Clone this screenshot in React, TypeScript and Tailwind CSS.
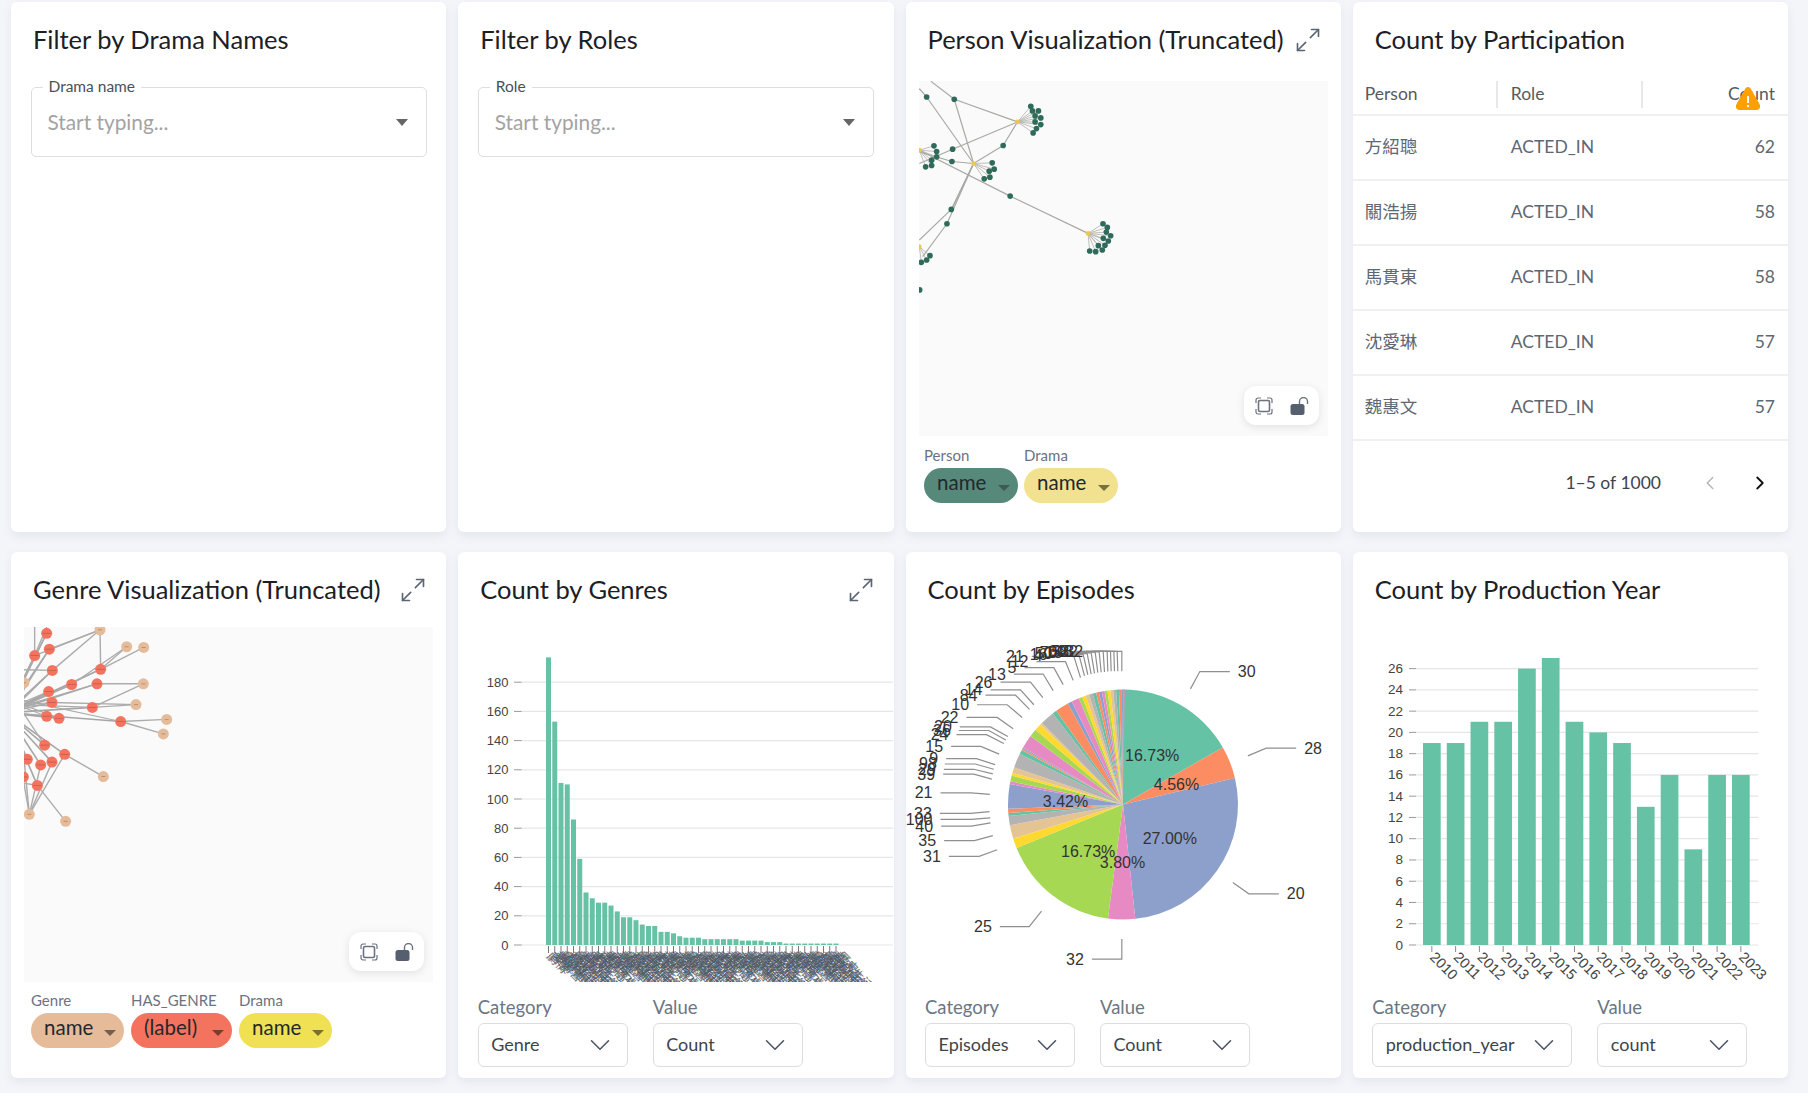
import { ChevronDown, ChevronLeft, ChevronRight, Maximize2 } from "lucide-react";
import type { ReactNode } from "react";

const rows = [
  ["方紹聰", "62"],
  ["關浩揚", "58"],
  ["馬貫東", "58"],
  ["沈愛琳", "57"],
  ["魏惠文", "57"],
];

const setColors = ["#66c2a5", "#fc8d62", "#8da0cb", "#e78ac3", "#a6d854", "#ffd92f", "#e5c494", "#b3b3b3"];

const genreCounts = [197, 153, 111, 110, 86, 59, 36, 32, 29, 29, 27, 23, 19, 19, 17, 14, 13, 13, 9, 9, 8, 6, 5, 5, 5, 4, 4, 4, 4, 4, 4, 3, 3, 3, 3, 2, 2, 2, 1, 1, 1, 1, 1, 1, 1, 1, 1];
const genreNames = ["劇情", "愛情喜劇", "動作片", "古裝", "懸疑推理", "家庭倫理", "都市生活", "警匪", "科幻奇幻", "歷史"];

const yearData = [19, 19, 21, 21, 26, 27, 21, 20, 19, 13, 16, 9, 16, 16];

const pieSlices = [16.73, 4.56, 27, 3.8, 16.73, 1.4, 1.9, 1.3, 0.4, 0.6, 3.42, 0.4, 0.8, 0.4, 0.8, 2.0, 0.6, 0.2, 0.2, 1.9, 1.1, 1.0, 0.3, 2.0, 0.6, 1.9, 0.6, 1.1, 0.5, 0.5, 0.5, 0.5, 0.5, 0.4, 0.4, 0.4, 0.4, 0.4, 0.4, 0.4, 0.4, 0.4, 0.4, 0.38];

// [label, startX, startY, kneeX, kneeY, endX, endY] in crop coordinates
const pieLeaders: [string, number, number, number, number, number, number][] = [
  ["30", 870, 422, 898, 373, 988, 373],
  ["28", 1042, 612, 1097, 590, 1187, 590],
  ["20", 997, 971, 1045, 1003, 1135, 1003],
  ["32", 664, 1131, 664, 1188, 574, 1188],
  ["25", 423, 1052, 386, 1096, 298, 1096],
  ["31", 290, 878, 236, 897, 145, 897],
  ["35", 277, 838, 222, 852, 131, 852],
  ["40", 270, 802, 213, 811, 122, 811],
  ["100", 269, 788, 212, 792, 120, 792],
  ["33", 267, 770, 210, 775, 118, 775],
  ["21", 268, 721, 212, 717, 120, 717],
  ["39", 274, 678, 220, 664, 128, 664],
  ["29", 277, 663, 220, 650, 130, 650],
  ["98", 280, 650, 224, 635, 133, 635],
  ["9", 284, 637, 228, 620, 137, 620],
  ["15", 296, 607, 241, 585, 152, 585],
  ["24", 310, 577, 258, 552, 168, 552],
  ["36", 316, 567, 265, 540, 175, 540],
  ["20", 322, 557, 270, 530, 178, 530],
  ["22", 338, 535, 290, 503, 198, 503],
  ["10", 365, 503, 320, 467, 230, 467],
  ["84", 387, 480, 345, 440, 255, 440],
  ["14", 400, 467, 360, 425, 270, 425],
  ["26", 427, 447, 390, 403, 300, 403],
  ["13", 458, 427, 428, 380, 340, 380],
  ["5", 488, 410, 460, 362, 372, 362],
  ["12", 518, 398, 495, 345, 408, 345],
  ["21", 540, 390, 520, 330, 394, 330],
  ["4", 552, 385, 536, 328, 450, 328],
  ["16", 562, 382, 548, 324, 465, 324],
  ["50", 572, 380, 560, 322, 480, 322],
  ["70", 582, 378, 572, 320, 495, 320],
  ["18", 592, 376, 584, 318, 510, 318],
  ["60", 602, 375, 596, 317, 520, 317],
  ["52", 612, 374, 608, 316, 530, 316],
  ["48", 622, 373, 620, 316, 540, 316],
  ["82", 632, 372, 630, 316, 556, 316],
  ["32", 642, 372, 640, 316, 572, 316],
  ["", 652, 372, 650, 316, 580, 316],
  ["", 664, 372, 664, 316, 590, 316],
];

const personEdges = [
  [45, 33, 115, 87], [115, 87, 305, 155], [115, 87, 173, 280], [10, 55, 32, 80], [32, 80, 173, 280],
  [305, 155, 110, 237], [110, 237, 10, 280], [305, 155, 262, 226], [262, 226, 173, 280], [108, 274, 173, 280],
  [108, 274, 10, 245], [517, 490, 283, 378], [283, 378, 10, 240], [173, 280, 106, 418], [173, 280, 93, 461],
  [106, 418, 10, 510], [93, 461, 20, 560], [173, 280, 110, 412],
];
const personHubs = [
  { x: 305, y: 155, leaves: [[345, 108], [350, 122], [368, 122], [358, 137], [375, 143], [358, 155], [375, 163], [362, 175], [352, 188]] },
  { x: 173, y: 280, leaves: [[229, 278], [235, 297], [220, 303], [222, 321], [205, 326]] },
  { x: 517, y: 490, leaves: [[562, 461], [575, 472], [572, 486], [585, 497], [563, 505], [578, 513], [568, 526], [548, 527], [560, 540], [540, 545], [522, 543]] },
  { x: 10, y: 240, leaves: [[54, 227], [62, 244], [62, 260], [47, 270], [47, 286], [29, 290]] },
  { x: 10, y: 530, leaves: [[42, 557], [32, 570], [16, 577]] },
];
const personDots = [[32, 80], [115, 87], [110, 237], [262, 226], [108, 274], [283, 378], [106, 418], [93, 461], [11, 660]];

const genreReds = [[140, 265], [148, 310], [104, 328], [157, 370], [302, 367], [215, 410], [291, 408], [146, 430], [156, 461], [277, 475], [140, 500], [177, 506], [362, 515], [134, 582], [194, 608], [82, 622], [122, 638], [156, 630], [112, 696], [70, 672]];
const genreTans = [[300, 255], [380, 303], [431, 305], [430, 408], [408, 467], [500, 509], [490, 550], [310, 671], [88, 778], [197, 798], [72, 405]];
const genreLinks = [
  [300, 255, 148, 310], [300, 255, 104, 328], [300, 255, 157, 370], [302, 367, 300, 255], [302, 367, 380, 303], [302, 367, 431, 305],
  [215, 410, 380, 303], [291, 408, 430, 408], [277, 475, 430, 408], [277, 475, 408, 467], [156, 461, 408, 467], [362, 515, 500, 509],
  [362, 515, 490, 550], [194, 608, 310, 671], [112, 696, 197, 798], [88, 778, 194, 608], [88, 778, 122, 638], [88, 778, 156, 630],
  [88, 778, 72, 620], [88, 778, 72, 690], [140, 247, 104, 328], [104, 247, 104, 320], [72, 368, 157, 370], [72, 690, 112, 696],
];

const gx = (x: number) => (x - 72) / 3;
const gy = (y: number) => (y - 247) / 2.835;
const cy = (y: number) => y / 2.835 - 87;

function FitIcon() {
  return (
    <svg width="18" height="18" viewBox="0 0 18 18" fill="none" stroke="#6b7280" strokeWidth="1.2">
      <rect x="3.5" y="3.5" width="11" height="11" rx="1.5" strokeWidth="1.6" />
      <path d="M1 6V3a2 2 0 0 1 2-2h3M12 1h3a2 2 0 0 1 2 2v3M17 12v3a2 2 0 0 1-2 2h-3M6 17H3a2 2 0 0 1-2-2v-3" />
    </svg>
  );
}

function LockIcon() {
  return (
    <svg width="20" height="18" viewBox="0 0 20 18" fill="none">
      <rect x="0.5" y="7" width="14" height="11" rx="2.5" fill="#555f6e" />
      <path d="M9.5 7.5V4.5a4 4 0 0 1 8 0V7" stroke="#6b7280" strokeWidth="1.4" />
    </svg>
  );
}

function GraphControls() {
  return (
    <div className="absolute right-[9px] bottom-[11px] flex h-[39px] w-[75px] items-center justify-between rounded-xl bg-white pl-[11px] pr-[9px] shadow-[0_2px_8px_rgba(0,0,0,0.1)]">
      <FitIcon />
      <LockIcon />
    </div>
  );
}

function Card({ children, className }: { children: ReactNode; className: string }) {
  return (
    <div className={"flex flex-col overflow-hidden rounded-[6px] bg-white shadow-[0_4px_10px_rgba(120,130,150,0.12)] " + className}>
      {children}
    </div>
  );
}

function CardHeader({ title, expand }: { title: string; expand?: boolean }) {
  return (
    <div className="flex h-[75px] shrink-0 items-center justify-between pl-[22px] pr-[19px]">
      <div className="text-[25.5px] leading-none text-[#1c2024] whitespace-nowrap">{title}</div>
      {expand && <Maximize2 size={28} strokeWidth={1.4} color="#5a6472" />}
    </div>
  );
}

function FilterBox({ label }: { label: string }) {
  return (
    <div className="relative mx-[19.5px] mt-[10px] flex h-[70px] items-center justify-between rounded-[5px] border-[1.5px] border-[#dedede] pl-[16px] pr-[18px]">
      <span className="absolute left-[11px] top-[-10px] bg-white px-[6px] text-[15.5px] leading-[16px] text-[#4a5058]">{label}</span>
      <span className="text-[20.8px] text-[#a3a3a3]">Start typing...</span>
      <span className="h-0 w-0 border-x-[6px] border-t-[7px] border-x-transparent border-t-[#666]" />
    </div>
  );
}

function Pill({ label, value, bg, width, caret }: { label: string; value: string; bg: string; width: string; caret: string }) {
  return (
    <div className="flex flex-col">
      <div className="h-[22px] text-[15px] leading-[18px] text-[#6b7280]">{label}</div>
      <div className={"flex h-[35px] items-center justify-between rounded-full pb-[6px] pl-[13px] pr-[8px] text-[20.5px] text-[#23282c] " + bg + " " + width}>
        <span>{value}</span>
        <span className={"mt-[10px] h-0 w-0 border-x-[6px] border-t-[6px] border-x-transparent " + caret} />
      </div>
    </div>
  );
}

function Dropdown({ value, width }: { value: string; width: string }) {
  return (
    <div className={"flex h-[44.5px] items-center justify-between rounded-[6px] border-[1.5px] border-[#dcdde0] pl-[12.5px] pr-[10px] text-[18px] text-[#3d444c] " + width}>
      <span>{value}</span>
      <ChevronDown size={34} strokeWidth={1.1} color="#4b5563" />
    </div>
  );
}

function ChartFooter({ category, value, categoryWidth = "w-[150px]" }: { category: string; value: string; categoryWidth?: string }) {
  return (
    <div className="flex gap-[25px] pl-[19.5px]">
      <div>
        <div className="flex h-[40.5px] items-center pt-[12px] text-[18.5px] text-[#6b7683]">Category</div>
        <Dropdown value={category} width={categoryWidth} />
      </div>
      <div>
        <div className="flex h-[40.5px] items-center pt-[12px] text-[18.5px] text-[#6b7683]">Value</div>
        <Dropdown value={value} width="w-[150px]" />
      </div>
    </div>
  );
}

function PersonGraph() {
  return (
    <div className="relative mx-[13px] mt-[4px] h-[355px] bg-[#fafafa]">
      <svg className="absolute inset-0 h-full w-full" viewBox="9 33 1230 1065">
        {personEdges.map((e, i) => (
          <line key={i} x1={e[0]} y1={e[1]} x2={e[2]} y2={e[3]} stroke="#a8a8a4" strokeWidth="3.5" />
        ))}
        {personHubs.map((h, i) =>
          h.leaves.map((l, j) => <line key={i + "-" + j} x1={h.x} y1={h.y} x2={l[0]} y2={l[1]} stroke="#b2b2ae" strokeWidth="2.5" />)
        )}
        {personHubs.map((h, i) =>
          h.leaves.map((l, j) => <circle key={i + "-" + j} cx={l[0]} cy={l[1]} r="8.5" fill="#2f6b5a" />)
        )}
        {personDots.map((d, i) => (
          <circle key={i} cx={d[0]} cy={d[1]} r="8.5" fill="#2f6b5a" />
        ))}
        {personHubs.map((h, i) => (
          <circle key={i} cx={h.x} cy={h.y} r="7" fill="#ecc94b" />
        ))}
      </svg>
      <GraphControls />
    </div>
  );
}

function GenreGraph() {
  return (
    <div className="relative mx-[13px] h-[355px] bg-[#fafafa]">
      <svg className="absolute inset-0 h-full w-full" width="410" height="355">
        {genreReds.map((n, i) => (
          <line key={i} x1={gx(20)} y1={gy(490)} x2={gx(n[0])} y2={gy(n[1])} stroke="#a6a6a6" strokeWidth="1.6" />
        ))}
        {genreReds.slice(0, 14).map((n, i) => (
          <line key={i} x1={gx(10 + i * 2)} y1={gy(520 - i * 6)} x2={gx(n[0])} y2={gy(n[1])} stroke="#ababab" strokeWidth="1.2" />
        ))}
        {genreLinks.map((e, i) => (
          <line key={i} x1={gx(e[0])} y1={gy(e[1])} x2={gx(e[2])} y2={gy(e[3])} stroke="#acacac" strokeWidth="1.4" />
        ))}
        {genreTans.map((n, i) => (
          <g key={i}>
            <circle cx={gx(n[0])} cy={gy(n[1])} r="5.5" fill="#e6bb9a" />
            <line x1={gx(n[0]) - 2} y1={gy(n[1])} x2={gx(n[0]) + 2} y2={gy(n[1])} stroke="#7a6a5a" strokeWidth="0.8" opacity="0.6" />
          </g>
        ))}
        {genreReds.map((n, i) => (
          <g key={i}>
            <circle cx={gx(n[0])} cy={gy(n[1])} r="5.5" fill="#f4735f" />
            <line x1={gx(n[0]) - 4} y1={gy(n[1])} x2={gx(n[0]) + 4} y2={gy(n[1])} stroke="#8a4a40" strokeWidth="0.7" opacity="0.6" />
          </g>
        ))}
      </svg>
      <GraphControls />
    </div>
  );
}

function GenreBars() {
  const base = 318;
  const ticks = Array.from({ length: 10 }, (_, i) => i * 20);
  return (
    <svg className="block shrink-0" width="435" height="355" fontFamily='"Liberation Sans", "Noto Sans CJK TC", Arial, sans-serif'>
      {ticks.map((t) => {
        const y = base - t * 1.46;
        return (
          <g key={t}>
            <line x1="63.7" x2="435" y1={y} y2={y} stroke="#e6e6e6" strokeWidth="1.2" />
            <line x1="56" x2="63.7" y1={y} y2={y} stroke="#9a9a9a" />
            <text x="50.5" y={y + 4.5} textAnchor="end" fontSize="13" fill="#444">{t}</text>
          </g>
        );
      })}
      {genreCounts.map((c, i) => {
        const x = 88 + i * 6.25;
        return (
          <g key={i}>
            <rect x={x} y={base - c * 1.46} width="5" height={c * 1.46} fill="#66c2a5" />
            <line x1={x + 2.5} x2={x + 2.5} y1={base + 1} y2={base + 8} stroke="#777" />
          </g>
        );
      })}
      {genreCounts.map((_, i) => {
        const x = 88 + i * 6.25;
        return (
          <g key={i} fill="#4b5563" fontSize="12" opacity="0.85">
            <text transform={`translate(${x} ${base + 12}) rotate(45)`}>{genreNames[i % 10]}</text>
            <text transform={`translate(${x + 3} ${base + 12}) rotate(45)`}>{genreNames[(i + 3) % 10]}</text>
          </g>
        );
      })}
    </svg>
  );
}

function YearBars() {
  const base = 318;
  const ticks = Array.from({ length: 14 }, (_, i) => i * 2);
  return (
    <svg className="block shrink-0" width="435" height="355" fontFamily='"Liberation Sans", Arial, sans-serif'>
      {ticks.map((t) => {
        const y = base - t * 10.63;
        return (
          <g key={t}>
            <line x1="63" x2="405.3" y1={y} y2={y} stroke="#e6e6e6" strokeWidth="1.2" />
            <line x1="56" x2="63" y1={y} y2={y} stroke="#9a9a9a" />
            <text x="50" y={y + 4.5} textAnchor="end" fontSize="13.5" fill="#444">{t}</text>
          </g>
        );
      })}
      {yearData.map((v, i) => {
        const x = 70 + i * 23.77;
        return (
          <g key={i}>
            <rect x={x} y={base - v * 10.63} width="17.7" height={v * 10.63} fill="#66c2a5" />
            <line x1={x + 8.85} x2={x + 8.85} y1={base + 1} y2={base + 7} stroke="#8a8a8a" />
            <text transform={`translate(${x + 6} ${base + 13}) rotate(45)`} fontSize="14.5" fill="#444">{2010 + i}</text>
          </g>
        );
      })}
    </svg>
  );
}

function PieChart() {
  const cx = 217;
  const cyy = 177.5;
  const r = 115;
  const px = (x: number) => (x - 16.5) / 3;
  let acc = 0;
  const inner: [string, number, number][] = [
    ["16.73%", 755, 610],
    ["4.56%", 828, 692],
    ["27.00%", 808, 846],
    ["3.80%", 666, 913],
    ["16.73%", 563, 883],
    ["3.42%", 495, 740],
  ];
  return (
    <svg className="block shrink-0" width="435" height="355" fontFamily='"Liberation Sans", Arial, sans-serif'>
      {pieSlices.map((p, i) => {
        const a0 = (acc / 100) * 2 * Math.PI;
        acc += p;
        const a1 = (Math.min(acc, 100) / 100) * 2 * Math.PI;
        const large = a1 - a0 > Math.PI ? 1 : 0;
        const d = `M${cx} ${cyy}L${cx + r * Math.sin(a0)} ${cyy - r * Math.cos(a0)}A${r} ${r} 0 ${large} 1 ${cx + r * Math.sin(a1)} ${cyy - r * Math.cos(a1)}Z`;
        return <path key={i} d={d} fill={setColors[i % 8]} />;
      })}
      {pieLeaders.map(([label, sx, sy, kx, ky, ex, ey], i) => (
        <g key={i}>
          <polyline
            points={`${px(sx)},${cy(sy)} ${px(kx)},${cy(ky)} ${px(ex)},${cy(ey)}`}
            fill="none"
            stroke="#8f8f8f"
            strokeWidth="1.2"
          />
          {label && (
            <text
              x={ex > kx ? px(ex) + 8 : px(ex) - 8}
              y={cy(ey) + 5.5}
              textAnchor={ex > kx ? "start" : "end"}
              fontSize="16"
              fill="#333"
            >
              {label}
            </text>
          )}
        </g>
      ))}
      {inner.map(([t, x, y], i) => (
        <text key={i} x={px(x)} y={cy(y) + 5.5} textAnchor="middle" fontSize="16" fill="#333">{t}</text>
      ))}
    </svg>
  );
}

function ParticipationTable() {
  return (
    <div className="flex flex-1 flex-col text-[17.5px]">
      <div className="relative mt-[1px] grid h-[38px] grid-cols-[145px_145px_1fr] items-center border-b-2 border-[#f0f0f0] pb-[3px] text-[#555b63]">
        <div className="border-r-2 border-[#e8e8e8] pl-[12px]">Person</div>
        <div className="border-r-2 border-[#e8e8e8] pl-[13px]">Role</div>
        <div className="pr-[13px] text-right">Count</div>
        <svg className="absolute left-[382px] top-[8px]" width="26" height="25" viewBox="0 0 26 25">
          <path d="M13 1 C14.5 1 15.5 2 16.5 4 L24.5 18 C26 21.5 24.5 24 21 24 L5 24 C1.5 24 0 21.5 1.5 18 L9.5 4 C10.5 2 11.5 1 13 1Z" fill="#ffa000" />
          <rect x="12" y="10" width="2" height="7" fill="#fff" />
          <rect x="12" y="19" width="2" height="2" fill="#fff" />
        </svg>
      </div>
      {rows.map(([name, count]) => (
        <div key={name} className="grid h-[65px] grid-cols-[145px_145px_1fr] items-center border-b-2 border-[#f0f0f0] text-[#5f6771]">
          <div className='pb-[2px] pl-[12px] text-[17.5px] font-["Noto_Sans_CJK_TC"]'>{name}</div>
          <div className="pl-[13px]">ACTED_IN</div>
          <div className="pr-[13px] text-right">{count}</div>
        </div>
      ))}
      <div className="flex h-[84px] items-center justify-end pr-[17px] text-[#3f444a]">
        <span className="mr-[38px]">1–5 of 1000</span>
        <ChevronLeft size={22} strokeWidth={1.5} color="#b4b4b4" className="mr-[28px]" />
        <ChevronRight size={22} strokeWidth={2} color="#111" />
      </div>
    </div>
  );
}

export default function App() {
  return (
    <div className='min-h-[1093px] overflow-hidden bg-[#f3f5f9] pl-[11px] pt-[2px] font-["Lato","Noto_Sans_CJK_TC",sans-serif]'>
      <div className="grid w-[1777px] grid-cols-4 gap-x-[12px] gap-y-[20px]">
        <Card className="h-[530px]">
          <CardHeader title="Filter by Drama Names" />
          <FilterBox label="Drama name" />
        </Card>
        <Card className="h-[530px]">
          <CardHeader title="Filter by Roles" />
          <FilterBox label="Role" />
        </Card>
        <Card className="h-[530px]">
          <CardHeader title="Person Visualization (Truncated)" expand />
          <PersonGraph />
          <div className="mt-[10px] flex gap-[6px] pl-[18.5px]">
            <Pill label="Person" value="name" bg="bg-[#57897a]" width="w-[94px]" caret="border-t-[#3f5a52]" />
            <Pill label="Drama" value="name" bg="bg-[#f2e18f]" width="w-[94px]" caret="border-t-[#77703f]" />
          </div>
        </Card>
        <Card className="h-[530px]">
          <CardHeader title="Count by Participation" />
          <ParticipationTable />
        </Card>

        <Card className="h-[526px]">
          <CardHeader title="Genre Visualization (Truncated)" expand />
          <GenreGraph />
          <div className="mt-[9px] flex gap-[7px] pl-[20px]">
            <Pill label="Genre" value="name" bg="bg-[#e6bb9a]" width="w-[93px]" caret="border-t-[#75604e]" />
            <Pill label="HAS_GENRE" value="(label)" bg="bg-[#f4735f]" width="w-[101px]" caret="border-t-[#7c3a30]" />
            <Pill label="Drama" value="name" bg="bg-[#f0e054]" width="w-[93px]" caret="border-t-[#79722a]" />
          </div>
        </Card>
        <Card className="h-[526px]">
          <CardHeader title="Count by Genres" expand />
          <GenreBars />
          <ChartFooter category="Genre" value="Count" />
        </Card>
        <Card className="h-[526px]">
          <CardHeader title="Count by Episodes" />
          <PieChart />
          <ChartFooter category="Episodes" value="Count" />
        </Card>
        <Card className="h-[526px]">
          <CardHeader title="Count by Production Year" />
          <YearBars />
          <ChartFooter category="production_year" value="count" categoryWidth="w-[200px]" />
        </Card>
      </div>
    </div>
  );
}
